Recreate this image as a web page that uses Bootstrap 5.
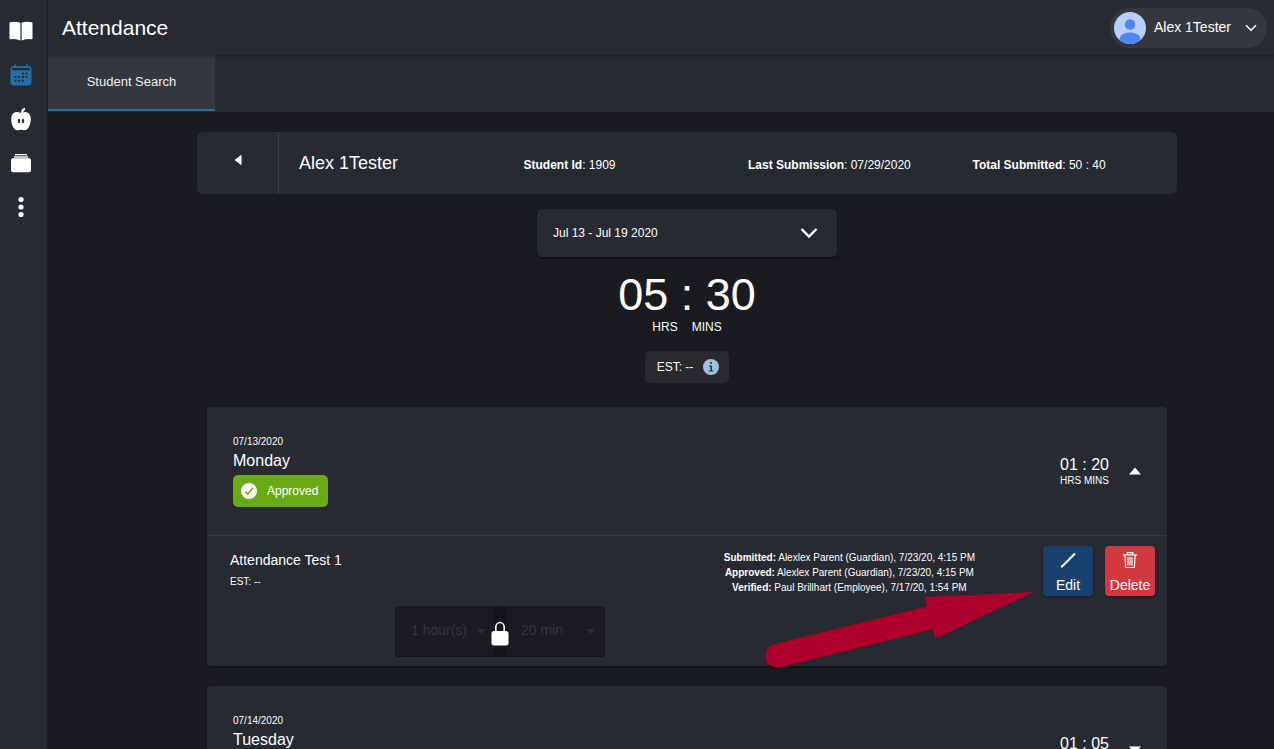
<!DOCTYPE html>
<html lang="en">
<head>
<meta charset="utf-8">
<meta name="viewport" content="width=device-width, initial-scale=1">
<title>Attendance</title>
<link href="https://cdn.jsdelivr.net/npm/bootstrap@5.3.0/dist/css/bootstrap.min.css" rel="stylesheet">
<style>
  :root { --surface: #272a31; --page: #1a1b1e; --raised: #35373e; --accent: #246fa8; }
  body { background: var(--page); color: #fff; font: 12px/16px "Liberation Sans", Arial, sans-serif; }
  .side { width: 48px; padding: 9px 5px 0 0; background: var(--surface); border-right: 1px solid #1c1d21; }
  .side a { height: 44px; color: #fff; }
  .side a.active { color: #246fa8; }
  .topbar { height: 55px; padding: 0 7px 0 14px; background: var(--surface); box-shadow: 0 1px 4px rgba(0,0,0,.35); z-index: 1; }
  .topbar h1 { font-size: 21px; line-height: 28px; }
  .user-pill { height: 40px; padding: 0 10px 0 4px; background: var(--raised); font-size: 14px; color: #fff; gap: 8px; }
  .user-pill svg:last-child { margin-left: 6px; }
  .tabs { height: 57px; background: var(--surface); }
  .tabs a { width: 167px; height: 56px; background: var(--raised); border-bottom: 2px solid var(--accent); color: #f0f0f1; font-size: 13px; }
  .content { padding: 20px 20px 20px 72px; scrollbar-width: none; }
  .content::-webkit-scrollbar { display: none; }
  .wrap { max-width: 980px; }
  .panel { background: var(--surface); border-radius: 6px; }
  .student { min-height: 62px; }
  .back { width: 82px; padding-bottom: 8px; border: 0; border-right: 1px solid #3a3d44; background: none; }
  .student .row > div { padding-left: 20px; }
  .student h2 { font-size: 18px; line-height: 24px; }
  .week { width: 300px; height: 48px; margin-top: 15px; padding: 0 16px; border: 0; border-radius: 5px; color: #fff; appearance: none;
    background: var(--surface) url("data:image/svg+xml,%3Csvg xmlns='http://www.w3.org/2000/svg' width='18' height='12' fill='none' stroke='white' stroke-width='2.4'%3E%3Cpath d='M1.5 2L9 9.500 16.500 2'/%3E%3C/svg%3E") no-repeat right 19px center;
    box-shadow: 0 1px 2px rgba(0,0,0,.6); }
  .total { margin-top: 14px; font-size: 45px; line-height: 48px; }
  .units { gap: 14px; }
  .est { height: 32px; margin-top: 16px; padding: 0 10px 0 12px; gap: 10px; background: #29292e; border-radius: 5px; }
  .days { padding: 24px 10px 0; gap: 20px; }
  .day { border-radius: 4px; background: var(--surface); box-shadow: 0 1px 2px rgba(0,0,0,.5); }
  .day-head { height: 128px; padding: 0 26px; }
  .day-info { align-self: flex-start; padding-top: 27px; }
  .tiny { font-size: 10px; line-height: 15px; }
  .day h3 { font-size: 16px; line-height: 24px; margin: 0 0 2px; }
  .approved { height: 32px; padding: 0 10px 0 8px; gap: 10px; border-radius: 5px; background: #6aaa14; }
  .hours { font-size: 16px; line-height: 20px; }
  .hours + div { line-height: 12px; }
  .toggle { border: 0; background: none; padding: 0; }
  .entry { padding: 10px 12px 9px 23px; border-top: 1px solid #373a42; }
  .entry h4 { font-size: 14px; line-height: 20px; margin: 4px 0; }
  .log { margin: 4px 68px 0 0; }
  .actions { gap: 12px; }
  .act { width: 50px; height: 50px; padding: 5px 0 2px; border: 0; border-radius: 4px; color: #fff; font-size: 14px; line-height: 18px; box-shadow: 0 1px 3px rgba(0,0,0,.4); }
  .edit { background: #19416f; }
  .del { background: #d2383f; }
  .picker { width: 210px; margin: 10px 0 0 165px; gap: 10px; background: #141519; border-radius: 4px; }
  .picker select { min-width: 0; height: 51px; padding: 0 16px 2px; border: 0; border-bottom: 1px solid #131417; border-radius: 4px; font-size: 14px; color: #36373a; opacity: 1; appearance: none;
    background: #1b1c1f url("data:image/svg+xml,%3Csvg xmlns='http://www.w3.org/2000/svg' width='10' height='5' fill='%232b2c30'%3E%3Cpath d='M0 0h10L5 5z'/%3E%3C/svg%3E") no-repeat right 9px center; }
  .lock { top: 15px; }
  .pointer { right: 131px; top: 183px; pointer-events: none; }
</style>
</head>
<body>
<div class="d-flex vh-100 overflow-hidden">
  <nav class="side d-flex flex-column flex-shrink-0" aria-label="Main">
    <a href="#" class="d-flex align-items-center justify-content-center" aria-label="Courses">
      <svg width="24" height="20" viewBox="0 0 24 20" fill="currentColor"><path d="M.5 2.200Q.5 1.500 1.200 1.300 7-.2 11.400 1.800V19.500Q7 17.300 1.300 18.300.5 18.400.5 17.600zM12.600 1.800Q17-.2 22.800 1.300 23.500 1.500 23.500 2.200V17.600Q23.500 18.400 22.700 18.300 17 17.300 12.600 19.500z"/></svg>
    </a>
    <a href="#" class="active d-flex align-items-center justify-content-center" aria-label="Attendance">
      <svg width="22" height="22" viewBox="0 0 22 22"><path fill="currentColor" d="M4 .5h2V2h10V.5h2V2q3.500 0 3.500 3v13q0 3.500-3.500 3.500H4Q.5 21.500.5 18V5q0-3 3.500-3z"/><g fill="#272a31"><path d="M2 4h18v2.200H2zM12 8.500h2v2h-2zM15.500 8.500h2v2h-2zM4.500 12h2v2h-2zM8.200 12h2v2h-2zM12 12h2v2h-2zM15.500 12h2v2h-2zM4.500 15.800h2v2h-2zM8.200 15.800h2v2h-2zM12 15.800h2v2h-2z"/></g></svg>
    </a>
    <a href="#" class="d-flex align-items-center justify-content-center" aria-label="Nutrition">
      <svg width="20" height="24" viewBox="0 0 20 24"><path fill="currentColor" d="M10 5.700C10 3 11.500.8 14 .8 14.500 3 13 4.700 11 5.600 15.500 3.800 19.800 6 19.800 12 19.800 17 17.500 23.300 13.500 23.300 12 23.300 11.500 22.700 10 22.700S8 23.300 6.500 23.300C2.500 23.300.2 17 .2 12 .2 6 4.500 4 9 5.700z"/><g fill="#272a31"><ellipse cx="8" cy="14" rx="1.200" ry="2.200"/><ellipse cx="12" cy="14" rx="1.200" ry="2.200"/></g></svg>
    </a>
    <a href="#" class="d-flex align-items-center justify-content-center" aria-label="Portfolio">
      <svg width="20" height="20" viewBox="0 0 20 20" fill="currentColor"><path d="M4 1h12v1.200H4z"/><path opacity=".7" d="M3 2.800h14V5H3z"/><rect y="5.200" width="20" height="14" rx="2"/></svg>
    </a>
    <a href="#" class="d-flex align-items-center justify-content-center" aria-label="More">
      <svg width="6" height="22" viewBox="0 0 6 22" fill="currentColor"><circle cx="3" cy="3.500" r="2.600"/><circle cx="3" cy="11" r="2.600"/><circle cx="3" cy="18.500" r="2.600"/></svg>
    </a>
  </nav>

  <div class="d-flex flex-column flex-grow-1 overflow-hidden">
    <header class="topbar d-flex align-items-center justify-content-between flex-shrink-0">
      <h1 class="m-0 fw-normal">Attendance</h1>
      <button type="button" class="user-pill btn rounded-pill border-0 d-flex align-items-center">
        <svg width="32" height="32" viewBox="0 0 32 32"><defs><clipPath id="av"><circle cx="16" cy="16" r="16"/></clipPath></defs><g clip-path="url(#av)"><path fill="#b8cffb" d="M0 0h32v32H0z"/><circle cx="16" cy="12.500" r="5.200" fill="#4f86f4"/><path fill="#4f86f4" d="M5.500 28C5.500 22.500 11 20.500 16 20.500S26.500 22.500 26.500 28V32h-21z"/></g></svg>
        <span>Alex 1Tester</span>
        <svg width="12" height="8" viewBox="0 0 12 8" fill="none" stroke="#fff" stroke-width="1.500"><path d="M1 1.200L6 6.200l5-5"/></svg>
      </button>
    </header>
    <nav class="tabs flex-shrink-0" aria-label="Sections">
      <a href="#" class="d-flex align-items-center justify-content-center text-decoration-none">Student Search</a>
    </nav>

    <main class="content flex-grow-1 overflow-auto">
      <div class="wrap mx-auto">
        <section class="panel student d-flex">
          <button type="button" class="back flex-shrink-0" aria-label="Back"><svg width="8" height="12" viewBox="0 0 8 12" fill="#fff"><path d="M.5 6L7.500 .8v10.400z"/></svg></button>
          <div class="row g-0 flex-grow-1 align-self-center align-items-baseline">
            <div class="col-3"><h2 class="m-0 fw-normal">Alex 1Tester</h2></div>
            <div class="col-3"><b>Student Id</b>: 1909</div>
            <div class="col-3"><b>Last Submission</b>: 07/29/2020</div>
            <div class="col-3"><b>Total Submitted</b>: 50 : 40</div>
          </div>
        </section>

        <section class="d-flex flex-column align-items-center">
          <select class="week" aria-label="Week"><option>Jul 13 - Jul 19 2020</option></select>
          <div class="total">05 : 30</div>
          <div class="units d-flex"><span>HRS</span><span>MINS</span></div>
          <div class="est d-flex align-items-center">
            <span>EST: --</span>
            <svg width="16" height="16" viewBox="0 0 16 16"><circle cx="8" cy="8" r="8" fill="#9cc3df"/><path fill="#27292e" d="M7.200 3h1.700v1.700H7.200zM6 6.500h2.900v4.900h1.500v1H5.700v-1h1.700V7.500H6z"/></svg>
          </div>
        </section>

        <div class="days d-flex flex-column">
          <article class="day position-relative">
            <div class="day-head d-flex align-items-center justify-content-between">
              <div class="day-info">
                <div class="tiny">07/13/2020</div>
                <h3 class="fw-normal">Monday</h3>
                <div class="approved d-flex align-items-center">
                  <svg width="16" height="16" viewBox="0 0 16 16"><circle cx="8" cy="8" r="8" fill="#fff"/><path d="M4 8.700l2.600 2.600 5.400-6.500" fill="none" stroke="#6aaa14" stroke-width="1.500"/></svg>
                  <span>Approved</span>
                </div>
              </div>
              <div class="d-flex align-items-center gap-3">
                <div class="text-center me-1"><div class="hours">01 : 20</div><div class="tiny">HRS MINS</div></div>
                <button type="button" class="toggle d-flex" aria-label="Collapse Monday"><svg width="12" height="8" viewBox="0 0 12 8" fill="#fff"><path d="M0 7.500L6 .5l6 7z"/></svg></button>
              </div>
            </div>
            <div class="entry">
              <div class="d-flex align-items-start">
                <div class="flex-grow-1">
                  <h4 class="fw-normal">Attendance Test 1</h4>
                  <div class="tiny">EST: --</div>
                </div>
                <div class="log tiny text-center">
                  <div><b>Submitted:</b> Alexlex Parent (Guardian), 7/23/20, 4:15 PM</div>
                  <div><b>Approved:</b> Alexlex Parent (Guardian), 7/23/20, 4:15 PM</div>
                  <div><b>Verified:</b> Paul Brillhart (Employee), 7/17/20, 1:54 PM</div>
                </div>
                <div class="actions d-flex flex-shrink-0">
                  <button type="button" class="act edit d-flex flex-column align-items-center justify-content-between">
                    <svg width="18" height="18" viewBox="0 0 18 18"><path d="M3 15.500L15.500 3" stroke="#fff" stroke-width="2" stroke-linecap="round"/><path d="M1.800 16.600l.8-2.500 1.700 1.600z" fill="#fff"/></svg>
                    Edit
                  </button>
                  <button type="button" class="act del d-flex flex-column align-items-center justify-content-between">
                    <svg width="16" height="18" viewBox="0 0 16 18" fill="none" stroke="#fff" stroke-width="1.200"><path d="M1 3.800h14M5.300 3.500V1.600h5.400v1.900M2.800 4l.9 12.500h8.600L13.200 4M6 6v8.500M8 6v8.500M10 6v8.500"/></svg>
                    Delete
                  </button>
                </div>
              </div>
              <div class="picker d-flex position-relative">
                <select class="flex-fill w-50" disabled aria-label="Hours"><option>1 hour(s)</option></select>
                <select class="flex-fill w-50" disabled aria-label="Minutes"><option>20 min</option></select>
                <svg class="lock position-absolute start-50 translate-middle-x" width="18" height="26" viewBox="0 0 18 26"><path d="M4.800 11V6.500a4.200 5 0 0 1 8.400 0V11" fill="none" stroke="#fff" stroke-width="1.600"/><rect x=".5" y="10" width="17" height="14.500" rx="2.500" fill="#fff"/></svg>
              </div>
            </div>
            <svg class="pointer position-absolute" width="272" height="80" viewBox="0 0 272 80" fill="#ad002b"><path d="M270 2L161 7l2 9.500L11 54a12 12 0 0 0 5 23.500L168.500 39.500l3 9.200z"/></svg>
          </article>

          <article class="day">
            <div class="day-head d-flex align-items-center justify-content-between">
              <div class="day-info">
                <div class="tiny">07/14/2020</div>
                <h3 class="fw-normal">Tuesday</h3>
              </div>
              <div class="d-flex align-items-center gap-3">
                <div class="text-center me-1"><div class="hours">01 : 05</div><div class="tiny">HRS MINS</div></div>
                <button type="button" class="toggle d-flex" aria-label="Expand Tuesday"><svg width="12" height="8" viewBox="0 0 12 8" fill="#fff"><path d="M0 .5L6 7.500l6-7z"/></svg></button>
              </div>
            </div>
          </article>
        </div>
      </div>
    </main>
  </div>
</div>
<script src="https://cdn.jsdelivr.net/npm/bootstrap@5.3.0/dist/js/bootstrap.bundle.min.js"></script>
</body>
</html>
